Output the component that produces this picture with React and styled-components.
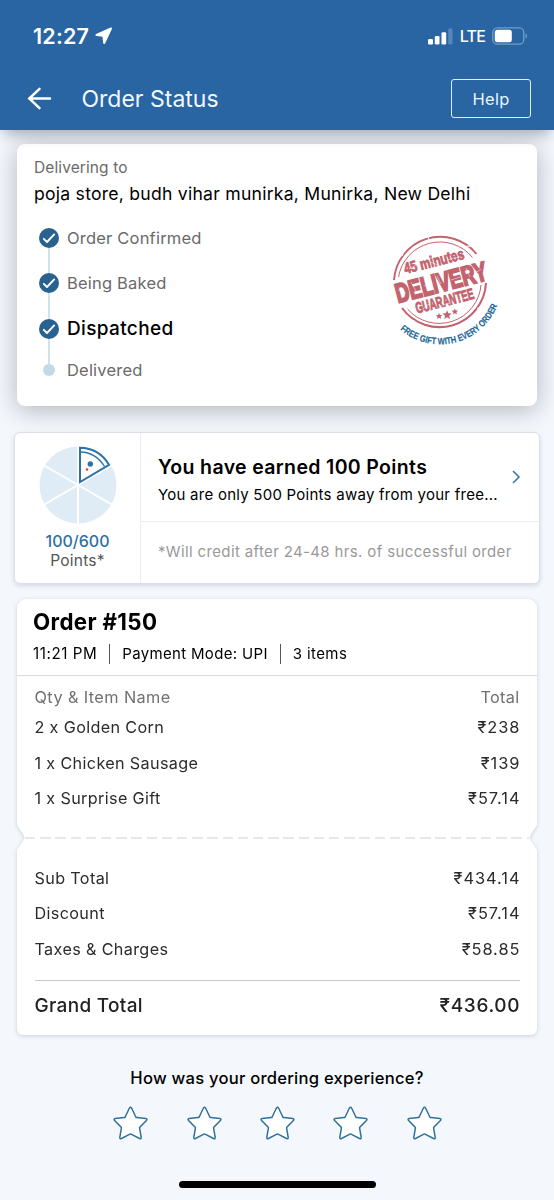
import React from 'react'
import styled, { createGlobalStyle, css } from 'styled-components'

const GlobalStyle = createGlobalStyle`
  * { box-sizing: border-box; }
  body {
    margin: 0;
    background: #f4f8fd;
    font-family: Inter, "Liberation Sans", sans-serif;
    color: #000;
  }
`

const Screen = styled.div`
  display: flex;
  flex-direction: column;
  width: 554px;
  height: 1200px;
  overflow: hidden;
`

const Header = styled.header`
  position: relative;
  z-index: 2;
  height: 130px;
  flex: none;
  background: #2964a3;
  color: #fff;
  box-shadow: 0 8px 14px -4px rgba(0, 0, 0, 0.32);
`

const StatusBar = styled.div`
  display: flex;
  align-items: center;
  height: 72px;
  padding: 0 26px 0 33px;
`

const Signals = styled.div`
  display: flex;
  align-items: center;
  gap: 7px;
  margin-left: auto;
`

const NavBar = styled.div`
  display: flex;
  align-items: center;
  height: 53px;
  padding: 0 23px 0 27px;
`

const Title = styled.h1`
  margin: 0 0 0 29.5px;
  color: #f1f9ff;
  font-size: 23px;
  font-weight: 400;
  line-height: 24px;
`

const HelpButton = styled.button`
  width: 80px;
  height: 39px;
  margin-left: auto;
  padding: 0;
  border: 1.5px solid #d9f1ff;
  border-radius: 3px;
  background: none;
  color: #e8f6ff;
  font: 400 16.5px Inter, sans-serif;
  letter-spacing: 0.3px;
`

const Text = styled.span`
  white-space: nowrap;
  font-size: ${p => p.$size || 16}px;
  font-weight: ${p => p.$weight || 400};
  letter-spacing: ${p => p.$spacing || 0}px;
  line-height: ${p => p.$line || 24}px;
  color: ${p => p.$color || 'inherit'};
`

const Price = styled(Text)`
  margin-right: -${p => p.$spacing}px;
`

const card = css`
  background: #fff;
  border-radius: 8px;
`

const DeliveryCard = styled.section`
  ${card}
  display: flex;
  flex-direction: column;
  height: 262px;
  flex: none;
  margin: 14px 17px 0;
  padding: 12px 17px 0;
  box-shadow: 0 4px 24px rgba(20, 20, 40, 0.3);
`

const DeliveryBody = styled.div`
  display: flex;
  justify-content: space-between;
`

const Steps = styled.div`
  display: flex;
  flex-direction: column;
  padding: 19.5px 0 0 5px;
`

const Step = styled.div`
  display: flex;
  align-items: center;
  gap: ${p => (p.$done ? 8 : 12)}px;
  height: 20px;
  margin-top: ${p => (p.$done ? 0 : -4)}px;
  padding-left: ${p => (p.$done ? 0 : 4)}px;
`

const StepLine = styled.div`
  width: 2px;
  height: 25.5px;
  margin-left: 9px;
  background: #cfe3ef;
`

const StepDot = styled.div`
  width: 12px;
  height: 12px;
  border-radius: 50%;
  background: #c3d9e8;
`

const StampBox = styled.div`
  padding: 19px 16px 0 0;
`

const PointsCard = styled.section`
  ${card}
  display: flex;
  height: 152px;
  flex: none;
  margin: 26px 14px 0;
  border: 1px solid #dcdfe6;
  border-radius: 6px;
  box-shadow: 0 2px 5px rgba(30, 30, 60, 0.14);
`

const PointsSide = styled.div`
  display: flex;
  flex-direction: column;
  align-items: center;
  width: 126px;
  padding-top: 13px;
  border-right: 1px solid #ecedf0;
`

const PointsMain = styled.div`
  flex: 1;
`

const Earned = styled.div`
  display: flex;
  align-items: center;
  justify-content: space-between;
  height: 89px;
  padding: 0 18px 0 17px;
  border-bottom: 1px solid #ecedf0;
`

const Stack = styled.div`
  display: flex;
  flex-direction: column;
  padding-top: 6px;
`

const CreditNote = styled.div`
  display: flex;
  align-items: center;
  height: 60px;
  padding-left: 17px;
`

const Receipt = styled.section`
  margin: 15px 17px 0;
  filter: drop-shadow(0 1px 2px rgba(50, 50, 90, 0.22));
`

const ReceiptTop = styled.div`
  height: 226px;
  background: #fff;
  border-radius: 9px 9px 0 0;
`

const ReceiptHead = styled.div`
  height: 77px;
  padding: 9px 16px 0;
  border-bottom: 1px solid #d9dadd;
`

const Meta = styled.div`
  display: flex;
  align-items: center;
  height: 26px;
  margin-top: 5px;
`

const Divider = styled.div`
  width: 1px;
  height: 20px;
  margin: 0 12px;
  background: #555;
`

const Rows = styled.div`
  padding: ${p => p.$top}px 17.5px 0;
`

const Row = styled.div`
  display: flex;
  align-items: center;
  justify-content: space-between;
  height: ${p => p.$height || 35.5}px;
  color: ${p => p.$color || '#2b2b2b'};
`

const Perforation = styled.div`
  display: flex;
  align-items: center;
  height: 25px;
  padding: 0 8px;
  background: #fff;
  clip-path: polygon(0 0, 100% 0, calc(100% - 6px) 9px, calc(100% - 7.5px) 12.5px, calc(100% - 6px) 16px, 100% 25px, 0 25px, 6px 16px, 7.5px 12.5px, 6px 9px);
`

const Dashes = styled.div`
  flex: 1;
  height: 2px;
  background: repeating-linear-gradient(90deg, #e6e7eb 0 10.5px, transparent 10.5px 15.2px);
`

const ReceiptBottom = styled.div`
  height: 185px;
  background: #fff;
  border-radius: 0 0 6px 6px;
`

const Total = styled.div`
  display: flex;
  align-items: center;
  justify-content: space-between;
  height: 52px;
  margin: 13px 17.5px 0;
  border-top: 1.5px solid #c9c9c9;
  color: #222;
`

const Rating = styled.section`
  display: flex;
  flex-direction: column;
  align-items: center;
  padding-top: 31px;
`

const Stars = styled.div`
  display: flex;
  gap: 37.3px;
  margin-top: 16px;
`

const HomeBar = styled.div`
  width: 197px;
  height: 7px;
  margin: auto auto 12px 179px;
  border-radius: 4px;
  background: #000;
`

const LocationArrow = () => (
  <svg width="18" height="18" viewBox="0 0 18 18" style={{ marginLeft: 6 }}>
    <path d="M16 1.500 1.500 8l6.800.800.900 7.200Z" fill="#fff" stroke="#fff" strokeWidth="2" strokeLinejoin="round" />
  </svg>
)

const Signal = () => (
  <svg width="25" height="17" viewBox="0 0 25 17">
    <rect x="0" y="11" width="5" height="5.5" rx="1.2" fill="#fff" />
    <rect x="6.8" y="8" width="4.7" height="8.5" rx="1.2" fill="#fff" />
    <rect x="13.5" y="4.3" width="4.7" height="12.2" rx="1.2" fill="#fff" />
    <rect x="20.2" y="0.5" width="4.3" height="16" rx="1.2" fill="#5488b8" />
  </svg>
)

const Battery = () => (
  <svg width="36" height="18" viewBox="0 0 36 18">
    <rect x="0.8" y="0.8" width="31" height="16.4" rx="4.5" fill="none" stroke="#719fca" strokeWidth="1.3" />
    <rect x="2.8" y="2.8" width="17" height="12.4" rx="2.5" fill="#fff" />
    <path d="M33.500 6.500c2 .5 2 4.500 0 5Z" fill="#719fca" />
  </svg>
)

const BackArrow = () => (
  <svg width="25" height="24" viewBox="0 0 25 24" fill="none" stroke="#fff" strokeWidth="2.5" strokeLinecap="round">
    <path d="M23 11.500H2.500M12.500 1.800 2.300 11.500l10.200 9.700" />
  </svg>
)

const Check = () => (
  <svg width="20" height="20" viewBox="0 0 20 20">
    <circle cx="10" cy="10" r="10" fill="#2a628f" />
    <path d="m4.800 10.800 3.200 3.200 7.200-7.600" fill="none" stroke="#fff" strokeWidth="1.900" strokeLinecap="round" strokeLinejoin="round" />
  </svg>
)

const Stamp = () => (
  <svg width="118" height="122" viewBox="386 228 118 122" fontFamily="'Liberation Sans', sans-serif" fontWeight="700">
    <defs>
      <path id="gift-arc" d="M400 330.500A61.500 61.500 0 0 0 500 298" />
    </defs>
    <g fill="none" stroke="#c4626d">
      <path d="M394 281A46.500 46.500 0 0 1 476.500 255" strokeWidth="1.900" />
      <path d="M398.500 278A42 42 0 0 1 472.500 258.500" strokeWidth="1" />
      <path d="M402 309A46.500 46.500 0 0 0 486 284" strokeWidth="2.100" />
      <path d="M407.500 310A42 42 0 0 0 481 286" strokeWidth="1" />
    </g>
    <path d="m464 240 5 5M467 247l9 1M404 252l-2 5M477 309l6 1M428 234l1 8M414 321l-3 5" stroke="#fff" />
    <g fill="#c4626d" stroke="#c4626d">
      <text fontSize="15.5" strokeWidth=".8" transform="translate(405.500 275) rotate(-14.5) scale(.76 1)">45 minutes</text>
      <text fontSize="27" strokeWidth="2" transform="translate(398 304) rotate(-14.5) scale(.7 1)">DELIVERY</text>
      <text fontSize="15.5" strokeWidth=".9" transform="translate(417 314.500) rotate(-14.5) scale(.61 1)">GUARANTEE</text>
    </g>
    <path
      d="m398 291 8 3M411 283l5 9M424 287l7-3M437 277l4 8M451 281l9-3M466 269l4 9M474 275l7-5M409 270l7-4M430 263l8 3M448 261l8-3M424 309l5-4M442 306l8-2M459 301l8-3"
      stroke="#fff"
      strokeWidth=".6"
      opacity=".8"
    />
    <g fill="#c4626d">
      <path d="m447 311.300 1.400 3 3.300.2-2.500 2.200.9 3.300-3-1.700-2.900 1.800.8-3.300-2.600-2.200 3.400-.3Z" />
      <path d="m439 314 1 2 2.300.1-1.700 1.600.6 2.300-2.100-1.200-2 1.300.5-2.300-1.800-1.500 2.300-.2Z" />
      <path d="m454.800 309.500 1 2 2.300.1-1.700 1.600.6 2.300-2.100-1.200-2 1.300.5-2.300-1.800-1.500 2.300-.2Z" />
    </g>
    <text fontSize="9.4" fill="#226696" stroke="#226696" strokeWidth=".15">
      <textPath href="#gift-arc" textLength="117" lengthAdjust="spacingAndGlyphs">FREE GIFT WITH EVERY ORDER</textPath>
    </text>
  </svg>
)

const Pizza = () => (
  <svg width="78" height="78" viewBox="0 0 78 78">
    <circle cx="39" cy="39" r="38.5" fill="#dfecf6" />
    <path d="M39 0v78M5.200 19.500l67.600 39M5.200 58.500l67.600-39" stroke="#fff" strokeWidth="2" />
    <path d="M39 39V0h4c14 0 24 7 31 18Z" fill="#fff" />
    <path d="M41 36V1.800C53 2 63.500 8 70 18.800Z" fill="#fff" stroke="#2c72aa" strokeWidth="2" />
    <path d="M41.500 6C52 6.300 60 11.500 65.500 20.500" fill="none" stroke="#2c72aa" strokeWidth="1.3" />
    <circle cx="51.3" cy="18" r="2.7" fill="#2c72aa" />
    <circle cx="48" cy="23.5" r="1.2" fill="#d8323f" />
  </svg>
)

const Chevron = () => (
  <svg width="9" height="14" viewBox="0 0 9 14" fill="none" stroke="#34729f" strokeWidth="1.5">
    <path d="m1 1 6 6-6 6" />
  </svg>
)

const Star = () => (
  <svg width="36" height="35" viewBox="-0.500 0 36 35">
    <path
      d="M16.800 2.300Q18 .4 19.200 2.300L23.300 11Q23.600 11.500 24.200 11.500L33.300 12.500Q35.200 12.900 33.900 14.500L27.300 21.200Q27 21.600 27.100 22.200L28.700 31.300Q28.800 33.300 27 32.500L18.600 28.100Q18 27.800 17.400 28.100L9 32.500Q7.200 33.300 7.300 31.300L8.900 22.200Q9 21.600 8.700 21.200L2.100 14.500Q.8 12.900 2.700 12.500L11.800 11.500Q12.400 11.500 12.700 11Z"
      fill="#fff"
      stroke="#30709d"
      strokeWidth="1.5"
    />
  </svg>
)

const steps = ['Order Confirmed', 'Being Baked', 'Dispatched']

const items = [
  ['2 x Golden Corn', '₹238'],
  ['1 x Chicken Sausage', '₹139'],
  ['1 x Surprise Gift', '₹57.14'],
]

const charges = [
  ['Sub Total', '₹434.14'],
  ['Discount', '₹57.14'],
  ['Taxes & Charges', '₹58.85'],
]

function App() {
  return (
    <Screen>
      <GlobalStyle />
      <Header>
        <StatusBar>
          <Text $size={21.5} $weight={600} $spacing={0.2}>12:27</Text>
          <LocationArrow />
          <Signals>
            <Signal />
            <Text $size={16} $weight={500} $spacing={-0.8}>LTE</Text>
            <Battery />
          </Signals>
        </StatusBar>
        <NavBar>
          <BackArrow />
          <Title>Order Status</Title>
          <HelpButton>Help</HelpButton>
        </NavBar>
      </Header>

      <DeliveryCard>
        <Text $size={15.5} $spacing={0.1} $color="#6a6a6a">Delivering to</Text>
        <Text $size={17.6} $spacing={0.24} $line={28}>poja store, budh vihar munirka, Munirka, New Delhi</Text>
        <DeliveryBody>
          <Steps>
            {steps.map((name, i) => (
              <React.Fragment key={name}>
                <Step $done>
                  <Check />
                  {i === 2
                    ? <Text $size={19} $weight={500} $spacing={0.35}>{name}</Text>
                    : <Text $size={16.5} $spacing={0.2} $color="#6a6a6a">{name}</Text>}
                </Step>
                <StepLine />
              </React.Fragment>
            ))}
            <Step>
              <StepDot />
              <Text $size={16.5} $spacing={0.2} $color="#6a6a6a">Delivered</Text>
            </Step>
          </Steps>
          <StampBox><Stamp /></StampBox>
        </DeliveryBody>
      </DeliveryCard>

      <PointsCard>
        <PointsSide>
          <Pizza />
          <Text $size={16} $weight={500} $line={20} $color="#2f6fa5" style={{ marginTop: 7 }}>100/600</Text>
          <Text $size={15.6} $spacing={0.2} $line={19} $color="#555">Points*</Text>
        </PointsSide>
        <PointsMain>
          <Earned>
            <Stack>
              <Text $size={19.5} $weight={600} $spacing={0.35} $line={28}>You have earned 100 Points</Text>
              <Text $size={15} $spacing={0.25} $line={27}>You are only 500 Points away from your free...</Text>
            </Stack>
            <Chevron />
          </Earned>
          <CreditNote>
            <Text $size={15} $spacing={0.36} $color="#999">*Will credit after 24-48 hrs. of successful order</Text>
          </CreditNote>
        </PointsMain>
      </PointsCard>

      <Receipt>
        <ReceiptTop>
          <ReceiptHead>
            <Text $size={22.3} $weight={700} $spacing={0.35} $line={28}>Order #150</Text>
            <Meta>
              <Text $size={15.2} $spacing={0.55}>11:21 PM</Text>
              <Divider />
              <Text $size={15} $spacing={0.33}>Payment Mode: UPI</Text>
              <Divider />
              <Text $size={15} $spacing={0.4}>3 items</Text>
            </Meta>
          </ReceiptHead>
          <Rows $top={8}>
            <Row $height={25.5} $color="#707070">
              <Text $size={16.3} $spacing={0.4}>Qty & Item Name</Text>
              <Text $size={16.3} $spacing={0.3}>Total</Text>
            </Row>
            {items.map(([name, price]) => (
              <Row key={name}>
                <Text $size={16.2} $spacing={0.35}>{name}</Text>
                <Price $size={16.4} $spacing={0.95}>{price}</Price>
              </Row>
            ))}
          </Rows>
        </ReceiptTop>
        <Perforation><Dashes /></Perforation>
        <ReceiptBottom>
          <Rows $top={10}>
            {charges.map(([name, price]) => (
              <Row key={name}>
                <Text $size={16.2} $spacing={0.35}>{name}</Text>
                <Price $size={16.4} $spacing={0.95}>{price}</Price>
              </Row>
            ))}
          </Rows>
          <Total>
            <Text $size={19} $weight={500} $spacing={0.3}>Grand Total</Text>
            <Price $size={19} $weight={500} $spacing={0.65}>₹436.00</Price>
          </Total>
        </ReceiptBottom>
      </Receipt>

      <Rating>
        <Text $size={16.6} $weight={500} $spacing={0.23}>How was your ordering experience?</Text>
        <Stars>
          {[1, 2, 3, 4, 5].map(n => <Star key={n} />)}
        </Stars>
      </Rating>
      <HomeBar />
    </Screen>
  )
}

export default App
